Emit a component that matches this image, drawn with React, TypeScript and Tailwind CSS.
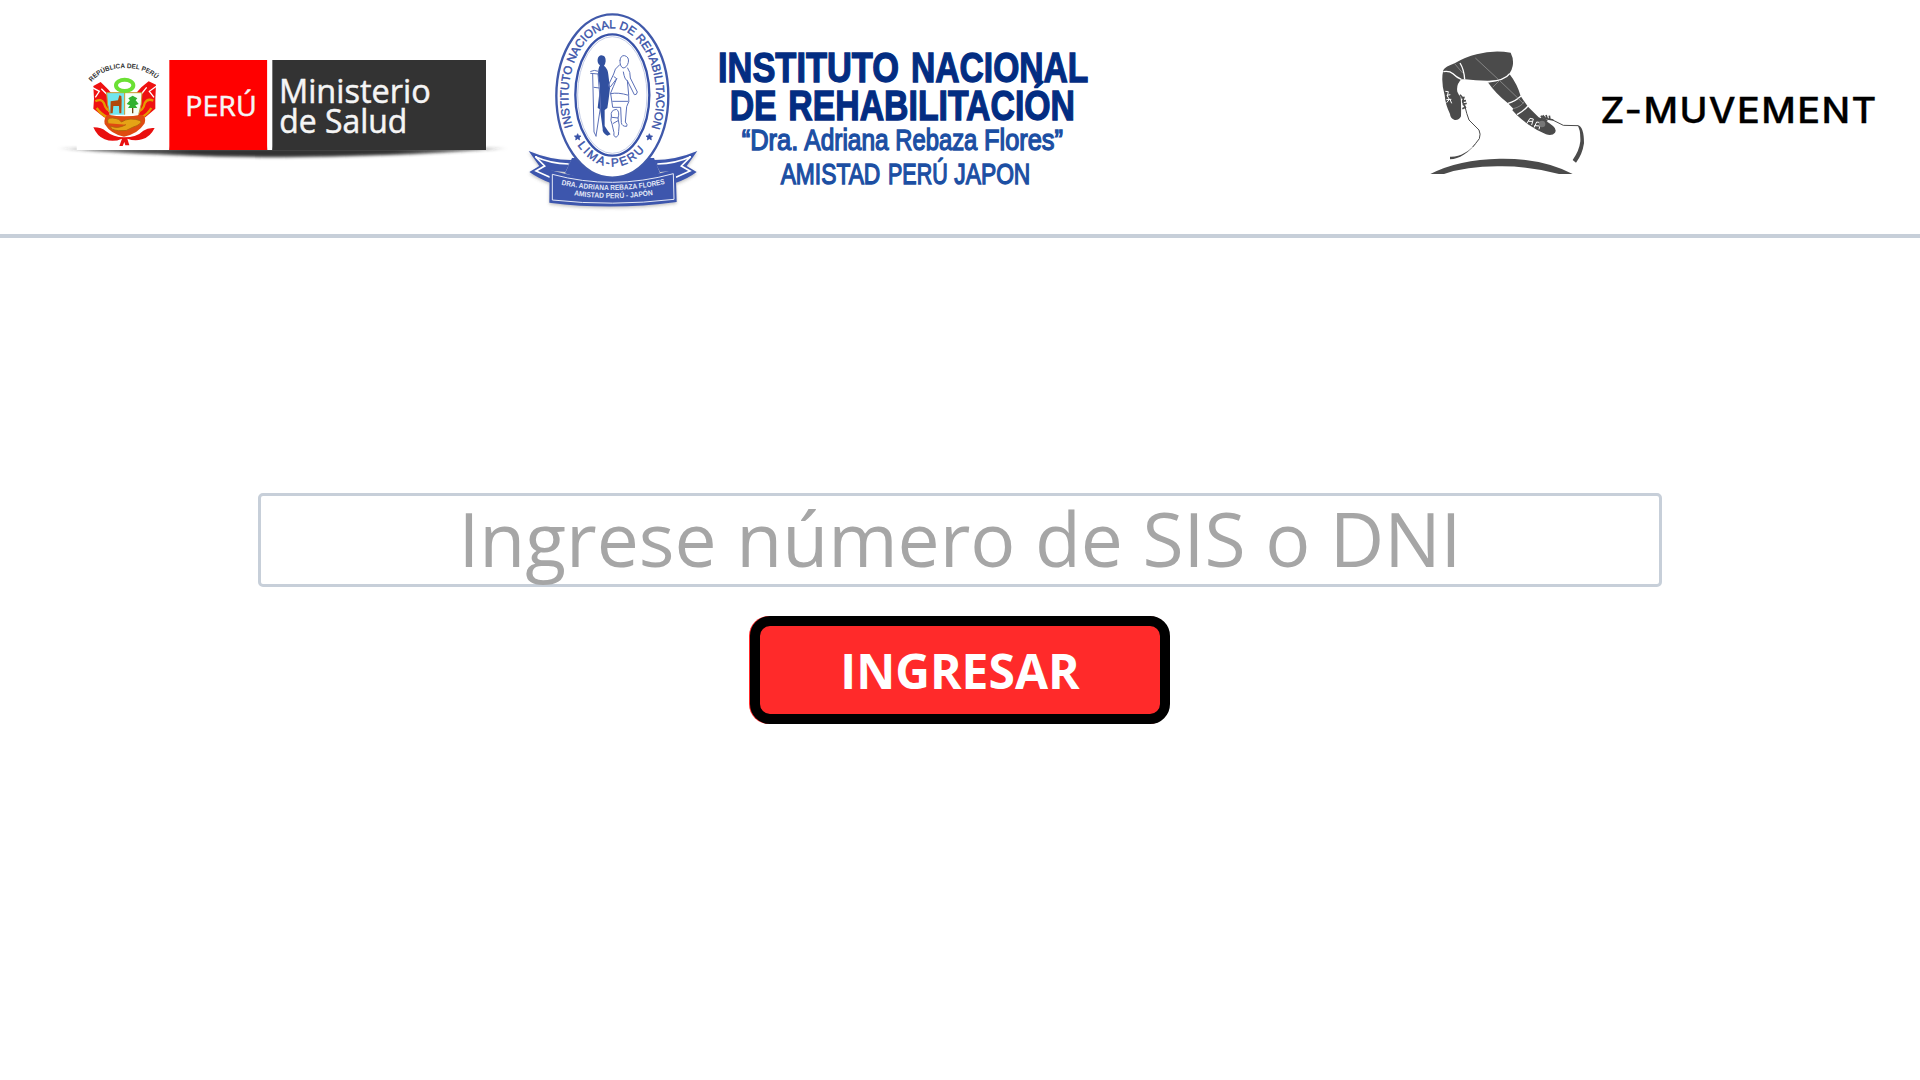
function MinistryLogo() {
  return (
    <svg className="mt-10 h-[130px] w-[480px] shrink-0" viewBox="0 0 1440 390" role="img" aria-label="PERÚ Ministerio de Salud">
      <defs>
        <linearGradient id="shade" x1="0" x2="1">
          <stop offset="0" stopColor="#333" stopOpacity="0.1" />
          <stop offset="0.08" stopColor="#333" stopOpacity="0.7" />
          <stop offset="0.3" stopColor="#333" />
          <stop offset="0.75" stopColor="#333" />
          <stop offset="0.93" stopColor="#333" stopOpacity="0.7" />
          <stop offset="1" stopColor="#333" stopOpacity="0.1" />
        </linearGradient>
        <filter id="soft" x="-5%" y="-80%" width="110%" height="260%">
          <feGaussianBlur stdDeviation="4" />
        </filter>
        <path id="crestArc" d="M155 126 Q190 84 256 84 Q320 84 357 126" />
      </defs>
      <path d="M50 325 H1405 Q1200 340 1040 345 Q720 358 400 345 Q200 338 50 325Z" fill="url(#shade)" filter="url(#soft)" />
      <path d="M110 270 H388 V330 H110Z" fill="#fff" />
      <rect x="388" y="60" width="294" height="270" fill="#f00" />
      <rect x="682" y="60" width="15" height="270" fill="#fff" />
      <rect x="697" y="60" width="641" height="270" fill="#333" />

      <text fontFamily="Liberation Sans" fontWeight="700" fontSize="20" fill="#333">
        <textPath href="#crestArc" textLength="214" lengthAdjust="spacingAndGlyphs">REPÚBLICA DEL PERÚ</textPath>
      </text>
      <g transform="translate(120 30)">
        <path d="M40 108 L62 96 L84 118 L98 134 L84 180 L94 208 L72 202 L40 176 L42 146Z" fill="#ef1111" />
        <path d="M228 104 L206 94 L184 112 L164 134 L180 180 L170 208 L196 202 L226 176 L226 146Z" fill="#ef1111" />
        <path d="M36 112 L58 124 L46 142 M64 116 L82 134 M230 108 L208 124 L222 142 M200 112 L184 132" fill="none" stroke="#fff" strokeWidth="4" />
        <path d="M46 154 Q64 144 72 160 Q78 184 96 184 M220 152 Q202 144 194 160 Q190 184 170 184 M50 174 Q62 192 82 202 M214 174 Q202 194 184 202" fill="none" stroke="#e59a00" strokeWidth="7" />
        <path d="M80 128 H134 V194 H90 Q80 160 80 128Z" fill="#70e5ef" />
        <path d="M136 128 H186 Q186 165 176 194 H136Z" fill="#f4fff4" />
        <path d="M80 128 H186 M134 126 V194 M80 128 Q80 164 90 194 M186 128 Q186 164 176 194" fill="none" stroke="#c9982c" strokeWidth="3" />
        <path d="M118 136 L124 138 L125 152 L124 190 L118 190 L117 168 L100 168 L98 190 L91 190 L92 154 L114 151Z" fill="#b0490c" />
        <path d="M158 190 V146" stroke="#70440c" strokeWidth="4" />
        <path d="M158 137 L172 145 L167 151 L176 162 L166 166 L172 174 L144 174 L150 166 L140 162 L150 151 L145 145Z" fill="#31b12e" />
        <ellipse cx="134" cy="106" rx="26" ry="17" fill="#fff" stroke="#6be034" strokeWidth="12" />
        <path d="M84 194 Q134 204 184 194 Q200 198 194 220 Q174 252 132 260 Q92 252 74 222 Q70 202 84 194Z" fill="#df4b11" />
        <path d="M84 220 Q78 202 98 204 Q120 206 124 216 Q148 200 182 212 Q188 222 158 232 Q140 246 116 242 Q90 240 92 228 Q112 238 138 224" fill="#e5a316" stroke="#b5640c" strokeWidth="3" />
        <path d="M40 232 Q66 232 78 244 Q100 262 132 262 Q170 262 190 242 Q204 232 224 234 Q210 262 186 268 Q164 274 142 266 L148 286 H136 L133 276 L128 288 H118 L126 266 Q100 278 74 268 Q52 260 40 232Z" fill="#e91010" />
      </g>

      <g fontFamily="Open Sans" fill="#f5f5f5" stroke="#f5f5f5" strokeWidth="1.5">
        <text x="436" y="227" fontSize="83" textLength="214" lengthAdjust="spacingAndGlyphs">PERÚ</text>
        <text x="717" y="188" fontSize="97" textLength="455" lengthAdjust="spacingAndGlyphs">Ministerio</text>
        <text x="718" y="278" fontSize="97" textLength="384" lengthAdjust="spacingAndGlyphs">de Salud</text>
      </g>
    </svg>
  );
}

function InstituteSeal() {
  return (
    <svg className="h-[220px] w-[190px] shrink-0" viewBox="0 0 570 660" role="img" aria-label="Instituto Nacional de Rehabilitación">
      <defs>
        <path id="sealTop" d="M158 380 A132 206 0 1 1 396 380" />
        <path id="sealBottom" d="M172 436 A154 230 0 0 0 388 432" />
        <path id="ribbonTop" d="M124 554 Q280 588 440 550" />
        <path id="ribbonBottom" d="M162 586 Q280 604 404 584" />
        <filter id="ribbonShadow">
          <feDropShadow dx="0" dy="5" stdDeviation="4" floodColor="#555" floodOpacity="0.35" />
        </filter>
      </defs>
      <g filter="url(#ribbonShadow)">
        <path d="M156 474 L135 520 Q277 570 420 520 L402 474Z" fill="#3d57ad" />
        <path d="M26 453 Q90 480 154 480 L136 516 L94 512 L90 548 Q60 538 28 516 L58 498Z" fill="#3d57ad" />
        <path d="M532 453 Q468 480 402 480 L420 516 L464 512 L468 548 Q500 538 530 516 L500 498Z" fill="#3d57ad" />
        <path d="M46 470 Q90 490 146 492 M46 470 L74 498 L48 513 L90 532 M512 470 Q468 490 412 492 M512 470 L484 498 L510 513 L468 532" fill="none" stroke="#fff" strokeWidth="5" />
        <path d="M89 510 Q277 564 467 508 L470 606 Q277 632 88 608Z" fill="#3d57ad" />
      </g>
      <path d="M97 523 Q277 572 460 521 L462 598 Q277 620 97 600Z" fill="none" stroke="#e5e9f6" strokeWidth="3" />
      <ellipse cx="277" cy="288" rx="168" ry="245" fill="#fff" stroke="#4059aa" strokeWidth="7" />
      <ellipse cx="277" cy="285" rx="111" ry="182" fill="#fff" stroke="#3852a8" strokeWidth="7" />
      <ellipse cx="277" cy="285" rx="104" ry="175" fill="none" stroke="#a7b3da" strokeWidth="2" />
      <g fontFamily="Liberation Sans" fill="#3852a8" stroke="#3852a8" strokeWidth="1.2">
        <text fontSize="35">
          <textPath href="#sealTop" textLength="722" lengthAdjust="spacingAndGlyphs">INSTITUTO NACIONAL DE REHABILITACION</textPath>
        </text>
        <text fontSize="35">
          <textPath href="#sealBottom" textLength="240">LIMA-PERU</textPath>
        </text>
      </g>
      <path d="M173 401 l3 6 7 1 -5 5 1 7 -6 -4 -6 4 1 -7 -5 -5 7 -1Z M388 401 l3 6 7 1 -5 5 1 7 -6 -4 -6 4 1 -7 -5 -5 7 -1Z" fill="#3852a8" stroke="#3852a8" strokeWidth="2" />

      <path d="M244 166 Q258 166 257 184 Q256 193 252 197 Q264 207 265 224 L270 264 Q266 300 262 324 L254 330 L254 378 Q264 394 272 403 L262 407 Q246 398 248 386 L240 328 L233 324 L240 262 L234 226 Q234 204 240 196 Q231 190 233 177 Q236 166 244 166Z" fill="#31509f" />
      <g fill="none" stroke="#5b70b8" strokeWidth="3" strokeLinejoin="round" strokeLinecap="round">
        <path d="M212 214 Q222 208 236 214 M212 220 L234 222 M218 222 L222 396 L228 408 M234 222 L242 318 L228 408 M222 262 L238 264" />
        <path d="M300 181 Q302 165 314 167 Q328 171 325 187 Q321 203 309 204 Q299 199 300 181" />
        <path d="M299 194 Q282 207 281 222 L266 254 Q264 260 270 262 L290 236 L282 230 M290 236 Q280 260 272 279 M323 204 Q332 216 331 234 L352 276 Q350 286 343 284 L322 242 Q314 240 310 216 M322 242 L326 284" />
        <path d="M272 281 Q294 276 326 286 Q330 306 320 320 L316 366 Q324 375 320 379 Q306 380 304 368 L302 322 L278 322 L272 281 M278 304 H324 M274 348 Q270 330 290 328 Q300 336 294 354 Q300 376 296 394 Q298 408 288 412 Q278 408 282 398 L276 372 Q270 362 274 348 M276 352 L294 354 M280 370 L294 362" />
      </g>
      <g fontFamily="Liberation Sans" fontWeight="700" fontSize="22" fill="#e3e8f7">
        <text><textPath href="#ribbonTop" textLength="314" lengthAdjust="spacingAndGlyphs">DRA. ADRIANA REBAZA FLORES</textPath></text>
        <text><textPath href="#ribbonBottom" textLength="238" lengthAdjust="spacingAndGlyphs">AMISTAD PERÚ - JAPÓN</textPath></text>
      </g>
    </svg>
  );
}

function InstituteName() {
  return (
    <svg className="mt-[30px] h-[180px] w-[390px] shrink-0" viewBox="30 0 1170 540">
      <g fontFamily="Liberation Sans Narrow, Liberation Sans, sans-serif">
        <g fontWeight="700" fontSize="128" fill="#032d82" stroke="#032d82" strokeWidth="4">
          <text x="54" y="157" textLength="543" lengthAdjust="spacingAndGlyphs">INSTITUTO</text>
          <text x="633" y="157" textLength="532" lengthAdjust="spacingAndGlyphs">NACIONAL</text>
          <text x="89" y="271" textLength="141" lengthAdjust="spacingAndGlyphs">DE</text>
          <text x="265" y="271" textLength="860" lengthAdjust="spacingAndGlyphs">REHABILITACIÓN</text>
        </g>
        <g fontSize="86" fill="#1c4fa3" stroke="#1c4fa3" strokeWidth="4">
          <text x="125" y="361" textLength="170" lengthAdjust="spacingAndGlyphs">“Dra.</text>
          <text x="313" y="361" textLength="253" lengthAdjust="spacingAndGlyphs">Adriana</text>
          <text x="586" y="361" textLength="246" lengthAdjust="spacingAndGlyphs">Rebaza</text>
          <text x="852" y="361" textLength="237" lengthAdjust="spacingAndGlyphs">Flores”</text>
          <text x="242" y="463" textLength="299" lengthAdjust="spacingAndGlyphs">AMISTAD</text>
          <text x="564" y="463" textLength="179" lengthAdjust="spacingAndGlyphs">PERÚ</text>
          <text x="763" y="463" textLength="228" lengthAdjust="spacingAndGlyphs">JAPON</text>
        </g>
      </g>
    </svg>
  );
}

function RunnerLogo() {
  return (
    <svg className="mt-10 h-[145px] w-[180px] shrink-0" viewBox="0 0 540 435" fill="none" role="img" aria-label="Z-Muvement">
      <path d="M70 90 Q76 80 104 70 Q136 51 170 43 Q220 29 272 38 Q282 58 278 78 Q276 90 268 101 Q292 132 302 168 Q312 184 324 200 L356 232 Q376 240 399 258 Q411 268 405 278 Q397 288 378 283 Q352 272 326 254 Q306 240 291 226 L277 211 L280 206 L264 190 Q228 162 203 126 L240 121 Q182 124 135 118 L124 118 Q108 134 112 155 Q116 164 122 172 Q124 192 123 229 Q118 241 104 240 Q91 236 90 222 Q76 194 74 166 Q62 124 70 90Z" fill="#4b4b4b" />
      <path d="M70 95 Q88 92 99 101 Q110 112 124 118 M134 118 Q132 88 120 69 M203 126 Q254 122 269 101 M264 190 Q286 184 303 168 M291 224 Q312 212 324 198" stroke="#fff" strokeWidth="4" />
      <path d="M104 71 L128 99 M280 206 Q304 200 313 184 M166 54 L238 121 L310 190 M240 120 L218 142" stroke="#a0a0a0" strokeWidth="2" />
      <path d="M76 154 L85 155 L82 168 L88 178 L80 188 M80 166 L91 164 M79 179 L94 178 M90 178 L95 190 M320 251 L330 235 L340 237 L335 255 M325 244 L338 244 M342 263 L350 246 L362 248 L357 268 M343 257 L360 258" stroke="#fff" strokeWidth="3" />
      <circle cx="366" cy="252" r="10" fill="#777" />
      <path d="M120 164 L130 176 L128 186 L136 202 L127 206 M124 174 L134 172 M126 184 L138 182 M128 194 L140 190 M362 228 L378 236 L400 240 M368 226 L376 234 M378 225 L382 236 M388 227 L390 240 M362 234 L382 244" stroke="#4b4b4b" strokeWidth="5" />
      <path d="M135 200 Q140 222 147 240 L177 270 Q183 282 178 296 Q166 312 158 321 M398 240 L430 256 L474 257" stroke="#4b4b4b" strokeWidth="3" />
      <path d="M178 296 Q158 327 131 344 Q111 357 90 358 V350 Q114 351 132 340 Q160 324 178 296Z M472 255 Q492 258 492 310 Q487 344 468 368 L458 360 Q478 332 481 304 Q482 268 472 255Z" fill="#4b4b4b" />
      <path d="M31 402 Q116 358 239 356 Q365 354 458 402 H417 Q330 378 239 379 Q143 378 72 402Z" fill="#4b4b4b" />
    </svg>
  );
}

export default function App() {
  return (
    <div className="flex h-[1080px] w-[1920px] flex-col overflow-hidden bg-white font-['Open_Sans',sans-serif]">
      <header className="flex h-[238px] items-start justify-between border-b-4 border-[#c7cfd9]">
        <div className="flex items-start pl-10">
          <MinistryLogo />
          <InstituteSeal />
          <InstituteName />
        </div>
        <div className="flex items-start pr-5">
          <RunnerLogo />
          <svg className="mt-[70px] h-20 w-[300px] shrink-0" viewBox="60 0 900 240">
            <text x="61" y="158" fontFamily="Inter" fontWeight="500" fontSize="108" letterSpacing="4" fill="#000" stroke="#000" strokeWidth="1" textLength="832" lengthAdjust="spacingAndGlyphs">Z-MUVEMENT</text>
          </svg>
        </div>
      </header>
      <main className="flex flex-col items-center pt-[255px]">
        <div
          role="textbox"
          className="flex h-[94px] w-[1404px] justify-center rounded-[5px] border-[3px] border-[#c7cfd9] text-[75px] leading-[88px] whitespace-nowrap text-[#a6a6a6]"
        >
          <span className="-mt-0.5">Ingrese número de SIS o DNI</span>
        </div>
        <button className="mt-[29px] h-[108px] w-[420px] rounded-[20px] border-[10px] border-black bg-[#ff2a2a] pt-px text-[48px] leading-none font-bold text-white shadow-[-1px_0_0_#ff2a2a]">
          INGRESAR
        </button>
      </main>
    </div>
  );
}
